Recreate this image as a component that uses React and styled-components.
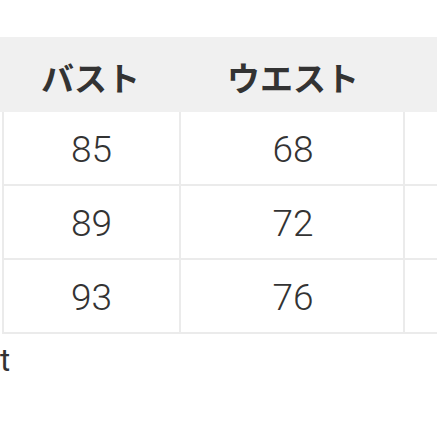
import styled, { createGlobalStyle } from 'styled-components'

const GlobalStyle = createGlobalStyle`
    html, body {
        margin: 0;
        padding: 0;
        background: #ffffff;
        overflow: hidden;
    }
    body {
        font-family: 'Helvetica Neue', Roboto, 'Liberation Sans', 'Noto Sans CJK JP', sans-serif;
        color: #333333;
    }
`

const Page = styled.div`
    width: 437px;
    height: 437px;
    padding-top: 37px;
    box-sizing: border-box;
    overflow: hidden;
`

const Table = styled.div`
    display: grid;
    grid-template-columns: 181px 224px 60px;
    width: 465px;
`

const HeadCell = styled.div`
    height: 75px;
    background: #f0f0f0;
    display: flex;
    align-items: center;
    justify-content: center;
    font-family: 'Noto Sans CJK JP', sans-serif;
    font-weight: 700;
    font-size: 33px;
    color: #333333;
    padding-top: 4px;
    box-sizing: border-box;
`

const Cell = styled.div`
    height: 74px;
    box-sizing: border-box;
    border-right: 2px solid #ebebeb;
    border-bottom: 2px solid #ebebeb;
    border-left: ${(props) => (props.first ? '2px solid #ebebeb' : 'none')};
    margin-left: ${(props) => (props.first ? '2px' : '0')};
    display: flex;
    align-items: center;
    justify-content: center;
    font-family: Roboto, 'Liberation Sans', sans-serif;
    font-weight: 300;
    font-size: 37px;
    color: #333333;
    padding-top: 2px;
    padding-left: ${(props) => (props.first ? '0' : '2px')};
`

const Caption = styled.div`
    margin-top: 9px;
    white-space: nowrap;
    font-family: Roboto, 'Liberation Sans', sans-serif;
    font-weight: 400;
    font-size: 31px;
    line-height: 36px;
    color: #333333;
`

const rows = [
    ['85', '68'],
    ['89', '72'],
    ['93', '76'],
]

const App = () => {
    return (
        <Page>
            <GlobalStyle />
            <Table>
                <HeadCell>バスト</HeadCell>
                <HeadCell>ウエスト</HeadCell>
                <HeadCell />
                {rows.map((row, i) => [
                    <Cell key={`b${i}`} first>
                        {row[0]}
                    </Cell>,
                    <Cell key={`w${i}`}>{row[1]}</Cell>,
                    <Cell key={`h${i}`} />,
                ])}
            </Table>
            <Caption>t</Caption>
        </Page>
    )
}

export default App
